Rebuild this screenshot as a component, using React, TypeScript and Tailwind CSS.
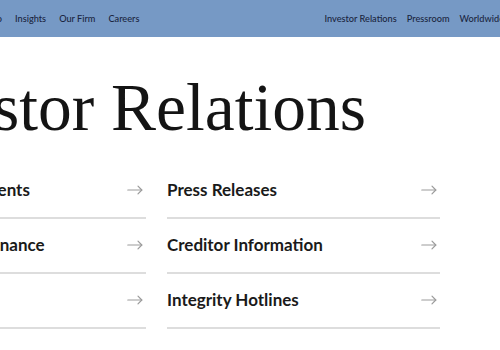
import React from 'react';

const leftNav = ['Portfolio', 'Insights', 'Our Firm', 'Careers'];
const rightNav = ['Investor Relations', 'Pressroom', 'Worldwide'];

const leftLinks = ['Financial Statements', 'Corporate Governance', 'SEC Filings'];
const rightLinks = ['Press Releases', 'Creditor Information', 'Integrity Hotlines'];

function Arrow() {
  return (
    <svg width="16" height="10" viewBox="0 0 16 10" fill="none" stroke="#9b9b9b" strokeWidth="1.2" strokeLinecap="round" strokeLinejoin="round">
      <path d="M0.8 5h14" />
      <path d="M11 1.2l3.8 3.8-3.8 3.8" />
    </svg>
  );
}

function LinkRow({ label }: { label: string }) {
  return (
    <a href="#" className="flex h-[55px] items-center justify-between border-b-2 border-[#dddddd] pr-[3px] text-[17px] font-bold text-[#1a1a1a] whitespace-nowrap">
      <span>{label}</span>
      <Arrow />
    </a>
  );
}

export default function App() {
  return (
    <div className="w-[500px] h-[350px] overflow-hidden bg-white font-['Lato',sans-serif]">
      {/* Top nav */}
      <header className="h-[37px] bg-[#7699c5] flex items-center justify-between text-[9.2px] font-medium text-[#1a2540] whitespace-nowrap">
        <nav className="flex gap-[13px] ml-[-33px]">
          {leftNav.map((n) => (
            <span key={n}>{n}</span>
          ))}
        </nav>
        <nav className="flex gap-[10px] mr-[-4px]">
          {rightNav.map((n) => (
            <span key={n}>{n}</span>
          ))}
        </nav>
      </header>

      <main className="ml-[-127px] w-[700px]">
        <h1 className="mt-[37px] font-['Liberation_Serif',serif] text-[67.5px] leading-none text-[#141414] whitespace-nowrap">
          Investor Relations
        </h1>
        <div className="mt-[22px] grid grid-cols-[273px_273px] gap-x-[21px]">
          <div className="flex flex-col">
            {leftLinks.map((l) => (
              <LinkRow key={l} label={l} />
            ))}
          </div>
          <div className="flex flex-col">
            {rightLinks.map((l) => (
              <LinkRow key={l} label={l} />
            ))}
          </div>
        </div>
      </main>
    </div>
  );
}
